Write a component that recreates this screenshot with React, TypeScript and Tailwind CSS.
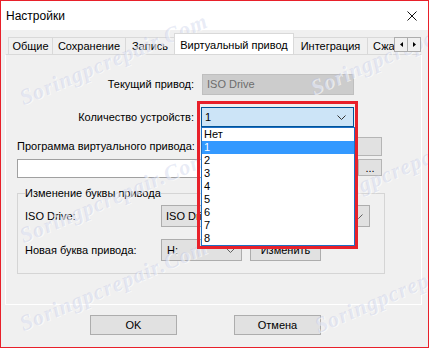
import React from "react";

function Chevron({ color = "#404040" }: { color?: string }) {
  return (
    <svg width="9" height="5" viewBox="0 0 9 5" className="shrink-0">
      <path d="M0.5 0.5L4.5 4.5L8.5 0.5" fill="none" stroke={color} strokeWidth="1" />
    </svg>
  );
}

function Watermark({ pos }: { pos: string }) {
  return (
    <span
      className={`pointer-events-none absolute ${pos} origin-bottom-left rotate-[-23deg] whitespace-nowrap font-['Liberation_Serif',serif] text-[22px] leading-none font-bold italic tracking-[1px] text-[#b4bce0]/30 [text-shadow:1px_1px_0_rgba(255,255,255,0.6)]`}
    >
      Soringpcrepair.Com
    </span>
  );
}

export default function App() {
  const items = ["Нет", "1", "2", "3", "4", "5", "6", "7", "8"];
  return (
    <div className="relative w-[429px] h-[348px] overflow-hidden bg-[#f0f0f0] border border-[#e8202a] font-['Liberation_Sans',sans-serif] text-[11px] leading-[13px] text-black">
      {/* Title bar */}
      <div className="h-[29px] bg-white flex items-center justify-between pl-[5px] pr-[11px]">
        <span className="text-[12px] leading-[14px]">Настройки</span>
        <svg width="10" height="10" viewBox="0 0 10 10">
          <path d="M0.5 0.5L9.5 9.5M9.5 0.5L0.5 9.5" stroke="#111" strokeWidth="1" />
        </svg>
      </div>

      {/* Tab strip */}
      <div className="relative h-[24px] flex items-end pl-[7px] overflow-hidden">
        <div className="w-[44px] h-[17px] border-l border-t border-[#d9d9d9] flex items-center justify-center">Общие</div>
        <div className="w-[73px] h-[17px] border-l border-t border-[#d9d9d9] flex items-center justify-center">Сохранение</div>
        <div className="w-[49px] h-[17px] border-l border-t border-[#d9d9d9] flex items-center justify-center">Запись</div>
        <div className="relative z-10 -mb-px w-[120px] h-[22px] border-l border-t border-r border-[#d9d9d9] bg-white flex items-start justify-center pt-[5px]">Виртуальный привод</div>
        <div className="w-[73px] h-[17px] border-t border-[#d9d9d9] flex items-center justify-center">Интеграция</div>
        <div className="w-[50px] h-[17px] shrink-0 border-l border-t border-[#d9d9d9] flex items-center pl-[5px]">Сжатие</div>
      </div>
      {/* tab scroll arrows (over tabs) */}
      <div className="absolute left-[393px] top-[36px] z-20 flex">
        <div className="w-[14px] h-[15px] bg-[#f0f0f0] border border-[#adadad] flex items-center justify-center">
          <svg width="3" height="5" viewBox="0 0 3 5"><path d="M3 0L0 2.5L3 5Z" fill="#000" /></svg>
        </div>
        <div className="w-[14px] h-[15px] -ml-px bg-[#f0f0f0] border border-[#adadad] flex items-center justify-center">
          <svg width="3" height="5" viewBox="0 0 3 5"><path d="M0 0L3 2.5L0 5Z" fill="#000" /></svg>
        </div>
      </div>

      {/* Tab panel */}
      <div className="ml-[4px] w-[417px] h-[251px] border border-white border-t-[#d9d9d9] flex flex-col">
        {/* row 1 */}
        <div className="mt-[19px] flex items-center h-[21px]">
          <div className="w-[188px] text-right">Текущий привод:</div>
          <div className="ml-[8px] w-[152px] h-[21px] bg-[#cccccc] border border-[#bfbfbf] text-[#6d6d6d] flex items-center pl-[4px]">ISO Drive</div>
        </div>
        {/* row 2 */}
        <div className="mt-[12px] flex items-center h-[20px]">
          <div className="w-[188px] text-right">Количество устройств:</div>
          <div className="ml-[7px] w-[153px] h-[20px] bg-[#cce4f7] border border-[#005499] flex items-center justify-between pl-[3px] pr-[7px]">
            <span>1</span>
            <Chevron color="#333" />
          </div>
        </div>
        {/* row 3 */}
        <div className="mt-[10px] flex items-center h-[19px] pl-[11px] pr-[39px]">
          <div className="flex-1">Программа виртуального привода:</div>
          <div className="w-[25px] h-[19px] bg-[#e1e1e1] border border-[#b5b5b5]" />
        </div>
        {/* row 4 */}
        <div className="mt-[3px] flex items-start pl-[11px] pr-[39px]">
          <div className="w-[336px] h-[19px] bg-white border border-[#a0a0a0]" />
          <div className="ml-[5px] w-[24px] h-[17px] bg-[#e1e1e1] border border-[#b5b5b5] flex items-center justify-center leading-[10px]">...</div>
        </div>
        {/* group */}
        <fieldset className="mt-[9px] ml-[11px] w-[368px] border border-[#d5d5d5] px-[7px] pb-[12px]">
          <legend className="px-0 leading-[13px]">Изменение буквы привода</legend>
          <div className="mt-[5px] flex items-center h-[22px]">
            <div className="w-[136px]">ISO Drive:</div>
            <div className="w-[209px] h-[22px] bg-[#e1e1e1] border border-[#adadad] flex items-center justify-between pl-[4px] pr-[6px]">
              <span>ISO Drive</span>
              <Chevron color="#606060" />
            </div>
          </div>
          <div className="mt-[12px] flex items-center h-[22px]">
            <div className="w-[136px]">Новая буква привода:</div>
            <div className="w-[81px] h-[22px] bg-[#e1e1e1] border border-[#adadad] flex items-center justify-between pl-[5px] pr-[6px]">
              <span>H:</span>
              <Chevron color="#606060" />
            </div>
            <div className="ml-[8px] w-[71px] h-[22px] bg-[#e1e1e1] border border-[#adadad] flex items-center justify-center">Изменить</div>
          </div>
        </fieldset>
      </div>

      {/* bottom buttons */}
      <div className="mt-[10px] flex pl-[89px] gap-[57px]">
        <div className="w-[87px] h-[20px] bg-[#e1e1e1] border border-[#adadad] flex items-center justify-center">OK</div>
        <div className="w-[87px] h-[20px] bg-[#e1e1e1] border border-[#adadad] flex items-center justify-center">Отмена</div>
      </div>

      {/* dropdown list (overlay) */}
      <div className="absolute left-[200px] top-[126px] w-[154px] h-[119px] bg-white border border-[#1e6fc4] z-30 flex flex-col">
        {items.map((it) => (
          <div
            key={it}
            className={`h-[13px] pl-[2px] leading-[13px] ${it === "1" ? "bg-[#3399ff] text-white" : ""}`}
          >
            {it}
          </div>
        ))}
      </div>

      {/* red annotation frame */}
      <div className="pointer-events-none absolute left-[196px] top-[100px] w-[161px] h-[148px] border-[3px] border-[#e8202a] z-40" />

      {/* watermarks */}
      <Watermark pos="left-[24px] top-[86px]" />
      <Watermark pos="left-[314px] top-[76px]" />
      <Watermark pos="left-[24px] top-[224px]" />
      <Watermark pos="left-[312px] top-[195px]" />
      <Watermark pos="left-[24px] top-[312px]" />
      <Watermark pos="left-[319px] top-[314px]" />
    </div>
  );
}
